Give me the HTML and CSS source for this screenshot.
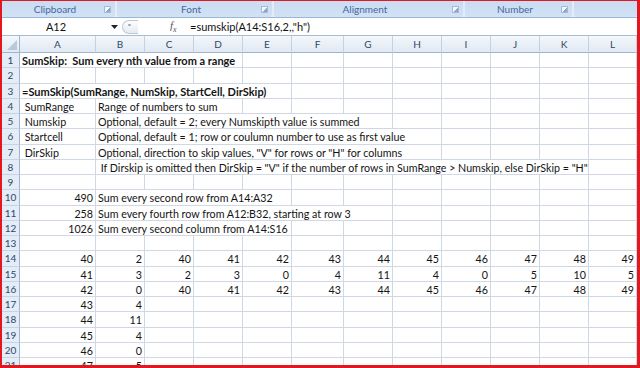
FILE: index.html
```html
<!DOCTYPE html>
<html lang="en">
<head>
  <meta charset="UTF-8">
  <meta name="viewport" content="width=device-width, initial-scale=1">
  <title>SumSkip - Microsoft Excel</title>
  <link rel="stylesheet" href="styles.css">
</head>
<body>

  <div class="window">
    <div class="ribbon">
      <div class="group group-clipboard"><span class="group-label">Clipboard</span><span class="launcher"></span></div>
      <div class="group group-font"><span class="group-label">Font</span><span class="launcher"></span></div>
      <div class="group group-align"><span class="group-label">Alignment</span><span class="launcher"></span></div>
      <div class="group group-number"><span class="group-label">Number</span><span class="launcher"></span></div>
      <div class="group group-rest"></div>
    </div>

    <div class="formula-bar">
      <div class="name-box">A12</div>
      <svg class="name-arrow" width="7" height="4" viewBox="0 0 7 4"><path d="M0 0h7L3.5 4z" fill="#222"/></svg>
      <div class="expand-btn"><span></span></div>
      <div class="fx">f<sub>x</sub></div>
      <div class="formula">=sumskip(A14:S16,2,,"h")</div>
    </div>

    <div class="sheet" id="sheet">
      <div class="corner"><svg width="10" height="10" viewBox="0 0 10 10"><path d="M10 0v10H0z" fill="#b9c9dc"/></svg></div>
    </div>
  </div>

  <script>
    const columns = ['A', 'B', 'C', 'D', 'E', 'F', 'G', 'H', 'I', 'J', 'K', 'L'];

    // each row: plain values, or {t, span, bold} for text that runs over the next cells
    const rows = [
      [{ t: 'SumSkip:  Sum every nth value from a range', span: 4, bold: true }],
      [],
      [{ t: '=SumSkip(SumRange, NumSkip, StartCell, DirSkip)', span: 5, bold: true }],
      [' SumRange', { t: 'Range of numbers to sum', span: 3 }],
      [' Numskip', { t: 'Optional, default = 2; every Numskipth value is summed', span: 6 }],
      [' Startcell', { t: 'Optional, default = 1; row or coulumn number to use as first value', span: 7 }],
      [' DirSkip', { t: 'Optional, direction to skip values, "V" for rows or "H" for columns', span: 7 }],
      ['', { t: ' If Dirskip is omitted then DirSkip = "V" if the number of rows in SumRange > Numskip, else DirSkip = "H"', span: 10 }],
      [],
      [490, { t: 'Sum every second row from A14:A32', span: 4 }],
      [258, { t: 'Sum every fourth row from A12:B32, starting at row 3', span: 6 }],
      [1026, { t: 'Sum every second column from A14:S16', span: 4 }],
      [],
      [40, 2, 40, 41, 42, 43, 44, 45, 46, 47, 48, 49],
      [41, 3, 2, 3, 0, 4, 11, 4, 0, 5, 10, 5],
      [42, 0, 40, 41, 42, 43, 44, 45, 46, 47, 48, 49],
      [43, 4],
      [44, 11],
      [45, 4],
      [46, 0],
      [47, 5]
    ];

    const sheet = document.getElementById('sheet');

    columns.forEach(col => {
      const head = document.createElement('div');
      head.className = 'col-head';
      head.textContent = col;
      sheet.appendChild(head);
    });

    rows.forEach((row, i) => {
      const num = document.createElement('div');
      num.className = 'row-head';
      num.textContent = i + 1;
      sheet.appendChild(num);

      let used = 0;
      row.forEach(value => {
        const cell = document.createElement('div');
        cell.className = 'cell';
        if (typeof value === 'number') {
          cell.classList.add('num');
          cell.textContent = value;
        } else if (typeof value === 'object') {
          cell.textContent = value.t;
          cell.style.gridColumn = 'span ' + value.span;
          if (value.bold) cell.classList.add('bold');
          used += value.span - 1;
        } else {
          cell.textContent = value;
        }
        sheet.appendChild(cell);
        used++;
      });

      for (; used < columns.length; used++) {
        const cell = document.createElement('div');
        cell.className = 'cell';
        sheet.appendChild(cell);
      }
    });
  </script>
</body>
</html>
```

FILE: styles.css
```css
* {
  margin: 0;
  padding: 0;
  box-sizing: border-box;
}

body {
  background: #fff;
  font-family: 'Lato', 'Liberation Sans', sans-serif;
  overflow: hidden;
}

.window {
  width: 640px;
  height: 368px;
  border: solid #e3171d;
  border-width: 1px 3px 3px 2px;
  overflow: hidden;
  display: flex;
  flex-direction: column;
}

/* ribbon group captions */
.ribbon {
  height: 17px;
  flex-shrink: 0;
  display: flex;
  background: #e3ecf8;
  border-bottom: 1px solid #99b6dd;
}

.group {
  display: flex;
  align-items: center;
  margin-right: 2px;
  background: linear-gradient(#c9dcf2, #d2e2f5);
  color: #4567a0;
  font-size: 10px;
  border-radius: 0 0 3px 3px;
}

.group-clipboard { width: 113px; }
.group-font { width: 155px; }
.group-align { width: 189px; }
.group-number { width: 107px; }
.group-rest { flex: 1; margin-right: 0; }

.group-label {
  flex: 1;
  text-align: center;
  padding-left: 4px;
}

.launcher {
  width: 7px;
  height: 7px;
  margin-right: 4px;
  border: 1px solid #a4bad6;
  background: linear-gradient(135deg, #f3f7fc 55%, #8fa6c4 56%);
}

/* formula bar */
.formula-bar {
  height: 18px;
  flex-shrink: 0;
  display: flex;
  align-items: center;
  background: #fff;
  border-bottom: 1px solid #a7bcd6;
  font-size: 11px;
  color: #111;
}

.name-box {
  width: 108px;
  text-align: center;
}

.name-arrow {
  margin-left: 1px;
}

.expand-btn {
  width: 16px;
  height: 14px;
  margin-left: 4px;
  border: 1px solid #bcc8d8;
  border-right: none;
  border-radius: 8px 0 0 8px;
  background: linear-gradient(#fdfdfe, #e4eaf2);
  position: relative;
}

.expand-btn span {
  position: absolute;
  left: 5px;
  top: 3px;
  width: 3px;
  height: 2px;
  background: #9aa8ba;
  border-radius: 1px;
}

.fx {
  margin-left: 32px;
  width: 20px;
  font-family: 'Liberation Serif', serif;
  font-style: italic;
  font-size: 11px;
  color: #555;
}

.fx sub {
  font-size: 8px;
}

.formula {
  white-space: pre;
}

/* worksheet */
.sheet {
  flex: 1;
  display: grid;
  grid-template-columns: 18px 76px repeat(4, 49px) 52px repeat(5, 49px) 1fr;
  grid-template-rows: 17px;
  grid-auto-rows: 15.26px;
  overflow: hidden;
  font-size: 10.7px;
}

.corner,
.col-head {
  background: linear-gradient(#f4f7fb, #e1e9f3);
  border-right: 1px solid #c3d1e1;
  border-bottom: 1px solid #9eb6ce;
}

.corner {
  display: flex;
  align-items: flex-end;
  justify-content: flex-end;
  padding: 0 2px 2px 0;
  border-right-color: #9eb6ce;
}

.col-head {
  text-align: center;
  line-height: 16px;
  color: #2e4866;
  font-size: 10px;
}

.row-head {
  background: #e4ecf7;
  border-right: 1px solid #9eb6ce;
  border-bottom: 1px solid #c5d3e3;
  text-align: center;
  color: #2e4866;
  font-size: 10px;
  line-height: 15px;
}

.cell {
  border-right: 1px solid #d0d7e5;
  border-bottom: 1px solid #d0d7e5;
  padding: 0 2px 0 2px;
  white-space: pre;
  color: #141414;
  line-height: 15px;
  overflow: hidden;
}

.cell.num {
  text-align: right;
}

.cell.bold {
  font-weight: bold;
  font-size: 11px;
}
```
